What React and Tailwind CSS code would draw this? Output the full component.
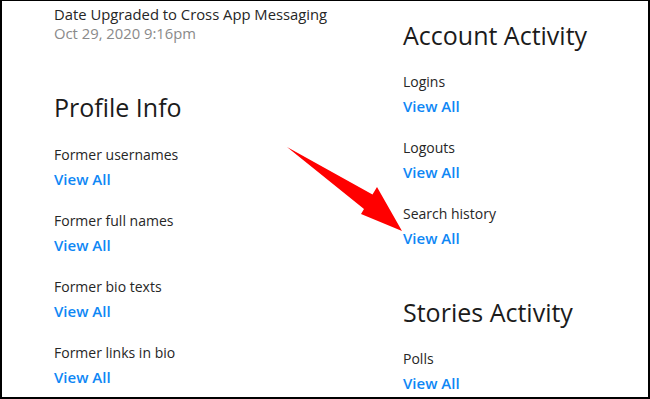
import React from "react";

const font = { fontFamily: '"Open Sans", "Noto Sans", sans-serif' };

function Item({ label, first }) {
  return (
    <div className={first ? "" : "mt-[21px]"}>
      <div className="pt-[1px] text-[14px] leading-[20px] text-[#262626]">{label}</div>
      <div className="mt-[4px] text-[15px] leading-[20px] font-semibold text-[#0f87f5]">View All</div>
    </div>
  );
}

export default function App() {
  return (
    <div className="relative w-[650px] h-[399px] bg-white overflow-hidden" style={font}>
      <div className="flex w-full h-full border-l-2 border-r-2 border-b-2 border-t border-black pl-[52px]">
        <div className="w-[349px] pt-[4px]">
          <div className="text-[14.8px] leading-[19px] text-[#262626]">Date Upgraded to Cross App Messaging</div>
          <div className="text-[14.8px] leading-[19px] text-[#8a8a8a]">Oct 29, 2020 9:16pm</div>
          <div className="mt-[48px] text-[25px] leading-[32px] text-[#1b1b1b]">Profile Info</div>
          <div className="mt-[21px]">
            <Item label="Former usernames" first />
            <Item label="Former full names" />
            <Item label="Former bio texts" />
            <Item label="Former links in bio" />
          </div>
        </div>
        <div className="flex-1 pt-[18px]">
          <div className="text-[25px] leading-[32px] text-[#1b1b1b]">Account Activity</div>
          <div className="mt-[20px]">
            <Item label="Logins" first />
            <Item label="Logouts" />
            <Item label="Search history" />
          </div>
          <div className="mt-[48px] text-[25px] leading-[32px] text-[#1b1b1b]">Stories Activity</div>
          <div className="mt-[20px]">
            <Item label="Polls" first />
          </div>
        </div>
      </div>
      <svg className="absolute inset-0 pointer-events-none" width="650" height="399" viewBox="0 0 650 399">
        <polygon
          points="287,147 372.5,194.6 377,187 402,231 361,214 364,209"
          fill="#ff0000"
        />
      </svg>
    </div>
  );
}
